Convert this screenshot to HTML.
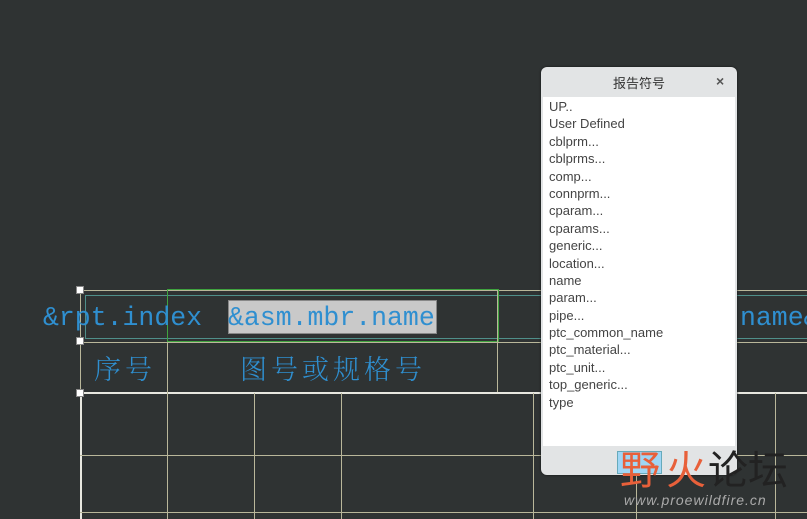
<!DOCTYPE html><html><head><meta charset="utf-8"><style>
body{margin:0;width:807px;height:519px;background:#2f3333;position:relative;overflow:hidden;font-family:"Liberation Sans","Noto Sans CJK SC",sans-serif}
.a{position:absolute}
.h{position:absolute;height:1px;background:#b9b79a}
.v{position:absolute;width:1px;background:#b9b79a}
.mono{font-family:"Liberation Mono",monospace;color:#2f8fd0;font-size:26.5px;line-height:36px;white-space:pre}
.cj{font-family:"Noto Serif CJK SC",serif;color:#2f8fd0;font-size:27px;line-height:36px;font-weight:300}
.hd{position:absolute;width:6px;height:6px;background:#fff;border:1px solid #888}
li{list-style:none;height:17.4px;line-height:17.4px}
</style></head><body>
<div class="h" style="left:80px;top:290px;width:727px"></div>
<div class="h" style="left:80px;top:342px;width:727px"></div>
<div class="a" style="left:85px;top:295px;width:730px;height:42px;border:1px solid #4f8f8a"></div>
<div class="a" style="left:167px;top:289px;width:330px;height:51px;border:1px solid #3fa33f"></div>
<div class="v" style="left:80px;top:290px;height:229px"></div>
<div class="v" style="left:497px;top:290px;height:103px"></div>
<div class="a" style="left:80px;top:392px;width:727px;height:2px;background:#e8e8e0"></div>
<div class="a" style="left:80px;top:393px;width:2px;height:126px;background:#e8e8e0"></div>
<div class="v" style="left:167px;top:342px;height:177px"></div>
<div class="v" style="left:254px;top:393px;height:126px"></div>
<div class="v" style="left:341px;top:393px;height:126px"></div>
<div class="v" style="left:533px;top:393px;height:126px"></div>
<div class="v" style="left:636px;top:393px;height:126px"></div>
<div class="v" style="left:775px;top:393px;height:126px"></div>
<div class="h" style="left:80px;top:455px;width:727px"></div>
<div class="h" style="left:80px;top:512px;width:727px"></div>
<div class="a" style="left:228px;top:300px;width:207px;height:32px;background:#c9c9c9;border:1px solid #888"></div>
<div class="a mono" style="left:43px;top:300px">&amp;rpt.index</div>
<div class="a mono" style="left:228px;top:300px">&amp;asm.mbr.name</div>
<div class="a mono" style="left:740px;top:300px">name&amp;</div>
<div class="a cj" style="left:94px;top:350px;letter-spacing:4px">序号</div>
<div class="a cj" style="left:240px;top:350px;letter-spacing:4px">图号或规格号</div>
<div class="hd" style="left:76px;top:286px"></div>
<div class="hd" style="left:76px;top:337px"></div>
<div class="hd" style="left:76px;top:389px"></div>
<div class="a" style="left:541px;top:67px;width:196px;height:408px;background:#e2e4e5;border-radius:6px;box-shadow:0 0 2px #111"></div>
<div class="a" style="left:541px;top:73px;width:196px;text-align:center;font-size:13px;color:#333">报告符号</div>
<div class="a" style="left:716px;top:73px;font-size:14px;color:#555;font-weight:bold">×</div>
<div class="a" style="left:543px;top:97px;width:192px;height:349px;background:#fff"></div>
<ul class="a" style="left:549px;top:98px;margin:0;padding:0;font-size:13px;color:#444">
<li>UP..</li><li>User Defined</li><li>cblprm...</li><li>cblprms...</li><li>comp...</li><li>connprm...</li><li>cparam...</li><li>cparams...</li><li>generic...</li><li>location...</li><li>name</li><li>param...</li><li>pipe...</li><li>ptc_common_name</li><li>ptc_material...</li><li>ptc_unit...</li><li>top_generic...</li><li>type</li></ul>
<div class="a" style="left:617px;top:451px;width:43px;height:21px;background:#9fd6f5;border:1px solid #6ab"></div>
<div class="a" style="left:620px;top:448px;font-size:40px;color:#e8603a;line-height:46px">野</div>
<div class="a" style="left:666px;top:448px;font-size:40px;color:#e8603a;line-height:46px">火</div>
<div class="a" style="left:708px;top:448px;font-size:40px;color:#222;line-height:46px">论坛</div>
<div class="a" style="left:624px;top:492px;font-size:14px;color:#aaa;font-style:italic;letter-spacing:1px">www.proewildfire.cn</div>
</body></html>
